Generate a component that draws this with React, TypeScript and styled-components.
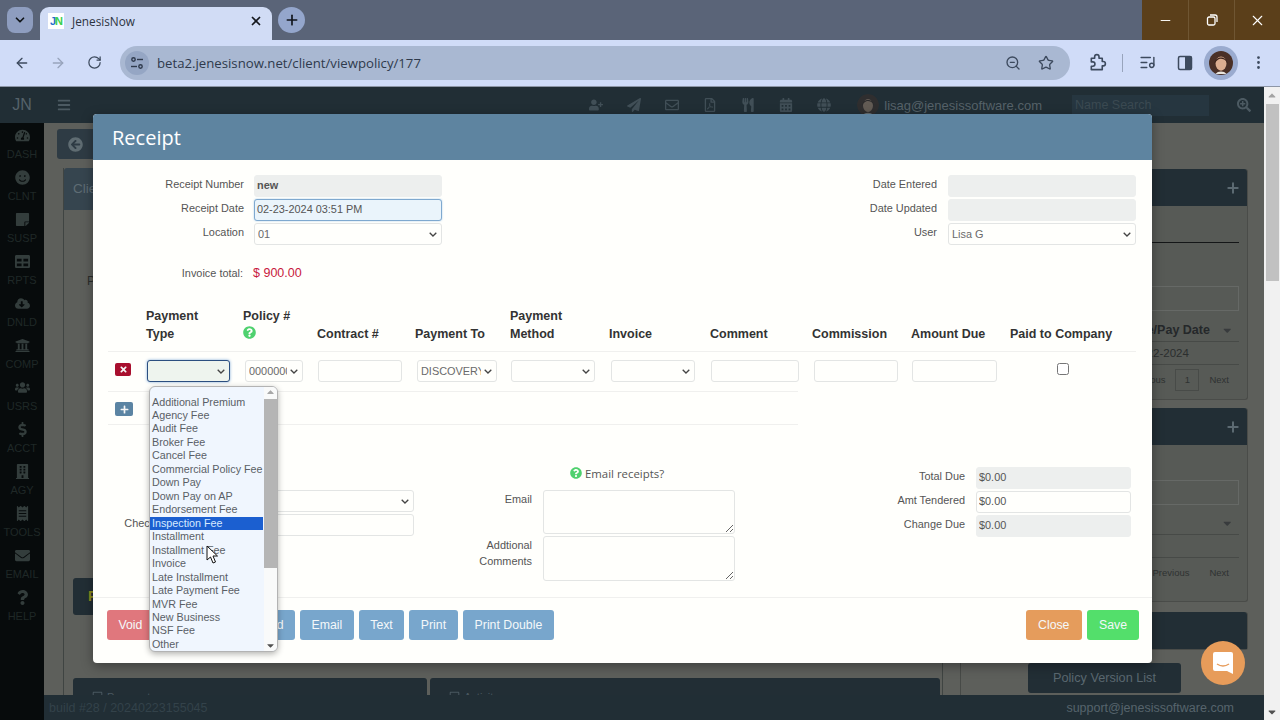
import React from "react";
import styled, { createGlobalStyle } from "styled-components";
import {
  ArrowLeft, ArrowRight, RotateCw, ZoomOut, Star, ListMusic, MoreVertical,
  ChevronDown, Plus, X, Minus,
} from "lucide-react";
import {
  FaTachometerAlt, FaSmile, FaStickyNote, FaTable, FaCloudDownloadAlt, FaUniversity, FaUsers,
  FaDollarSign, FaBuilding, FaReceipt, FaEnvelope, FaQuestion, FaUserPlus, FaPaperPlane,
  FaRegEnvelope, FaRegFilePdf, FaUtensils, FaCalendarAlt, FaGlobe, FaSearchPlus, FaBars,
  FaArrowCircleLeft, FaQuestionCircle, FaTimes, FaPlus, FaCaretDown, FaRegSquare,
} from "react-icons/fa";

const Global = createGlobalStyle`
  html, body { margin: 0; padding: 0; background: #5d5f5b; }
  * { box-sizing: border-box; }
  body { font-family: "Liberation Sans", Arial, sans-serif; }
`;

const Page = styled.div`
  position: relative;
  width: 1280px;
  height: 720px;
  overflow: hidden;
  display: flex;
  flex-direction: column;
`;

/* ---------- browser chrome ---------- */
const TabStrip = styled.div`
  height: 40px;
  background: #5a6478;
  display: flex;
  align-items: flex-end;
  padding-left: 7px;
  flex: none;
`;
const TabMenu = styled.div`
  width: 26px;
  height: 26px;
  margin-bottom: 7px;
  border-radius: 8px;
  background: #8e9dbf;
  color: #101418;
  display: flex;
  align-items: center;
  justify-content: center;
`;
const Tab = styled.div`
  width: 232px;
  height: 33px;
  margin-left: 7px;
  background: #d1dcf5;
  border-radius: 9px 9px 0 0;
  display: flex;
  align-items: center;
  padding: 0 9px 6px 8px;
  color: #2c3340;
  font: 11.8px "Open Sans", sans-serif;
`;
const Favicon = styled.div`
  width: 16px;
  height: 16px;
  background: #fff;
  font: bold 11px/16px "Liberation Sans", sans-serif;
  letter-spacing: -1px;
  text-align: center;
  margin-right: 8px;
  flex: none;
`;
const FavJ = styled.span`
  color: #1f6fd0;
`;
const FavN = styled.span`
  color: #3ccf4e;
`;
const TabTitle = styled.span`
  flex: 1;
`;
const NewTab = styled.div`
  width: 27px;
  height: 26px;
  margin: 0 0 7px 6px;
  border-radius: 50%;
  background: #94a6cc;
  color: #10151c;
  display: flex;
  align-items: center;
  justify-content: center;
`;
const WindowControls = styled.div`
  margin-left: auto;
  align-self: stretch;
  display: flex;
  background: #5b3f1a;
`;
const WinButton = styled.div`
  width: 46px;
  color: #fff;
  display: flex;
  align-items: center;
  justify-content: center;
  & + & {
    border-left: 1px solid #6f5633;
  }
`;
const Toolbar = styled.div`
  height: 47px;
  flex: none;
  background: #d0dcf8;
  border-bottom: 1px solid #8d96a6;
  display: flex;
  align-items: center;
  padding: 0 0 1px 0;
  color: #3d4a5e;
`;
const NavButton = styled.div<{ $dim?: boolean }>`
  width: 36px;
  display: flex;
  justify-content: center;
  color: ${(p) => (p.$dim ? "#98a4bc" : "#3d4a5e")};
`;
const NavGroup = styled.div`
  display: flex;
  width: 120px;
  padding-left: 4px;
`;
const AddressBar = styled.div`
  width: 950px;
  height: 34px;
  border-radius: 17px;
  background: #a9b8d2;
  display: flex;
  align-items: center;
  padding: 0 16px 0 5px;
  color: #2f3a4c;
  font: 13.2px "Open Sans", sans-serif;
`;
const SiteChip = styled.div`
  width: 24px;
  height: 24px;
  border-radius: 50%;
  background: #95a6c4;
  margin-right: 8px;
  display: flex;
  align-items: center;
  justify-content: center;
`;
const UrlText = styled.span`
  flex: 1;
`;
const AddressIcons = styled.div`
  display: flex;
  gap: 17px;
  color: #3d4a5e;
`;
const ToolIcons = styled.div`
  display: flex;
  align-items: center;
  margin-left: 8px;
`;
const ToolIcon = styled.div`
  width: 38px;
  display: flex;
  justify-content: center;
`;
const ToolDivider = styled.div`
  width: 1px;
  height: 18px;
  background: #98a4bc;
  margin: 0 5px 0 6px;
`;
const ProfileChip = styled.div`
  width: 34px;
  height: 34px;
  border-radius: 50%;
  background: #9aabcf;
  display: flex;
  align-items: center;
  justify-content: center;
  margin: 0 1px 0 0;
`;

/* ---------- dimmed application ---------- */
const Viewport = styled.div`
  flex: 1;
  min-height: 0;
  display: flex;
`;
const AppArea = styled.div`
  width: 1264px;
  display: flex;
  flex-direction: column;
`;
const TopBar = styled.div`
  height: 36px;
  flex: none;
  background: #212e35;
  display: flex;
  align-items: center;
  color: #414f57;
`;
const Brand = styled.div`
  width: 44px;
  text-align: center;
  font-size: 16px;
  font-weight: normal;
  color: #55626a;
`;
const MenuIcon = styled.div`
  margin-left: 13px;
  display: flex;
  color: #4c5a62;
`;
const TopIcons = styled.div`
  margin-left: auto;
  display: flex;
`;
const TopIcon = styled.div`
  width: 38px;
  display: flex;
  justify-content: center;
`;
const UserFace = styled.div`
  width: 22px;
  height: 22px;
  border-radius: 50%;
  margin: 0 5px 0 14px;
  overflow: hidden;
  display: flex;
  opacity: 0.35;
`;
const UserMail = styled.span`
  font-size: 13px;
  color: #566269;
  margin-right: 30px;
`;
const NameSearch = styled.div`
  width: 137px;
  height: 21px;
  background: #263640;
  color: #3b4a52;
  font-size: 12.5px;
  line-height: 21px;
  padding-left: 3px;
  margin-right: 28px;
`;
const SearchIcon = styled.div`
  margin-right: 13px;
  display: flex;
  color: #4c5a62;
`;
const Body = styled.div`
  flex: 1;
  min-height: 0;
  display: flex;
`;
const Sidebar = styled.div`
  width: 44px;
  flex: none;
  background: #070b0c;
  padding-top: 6px;
  display: flex;
  flex-direction: column;
`;
const SideItem = styled.div`
  height: 42px;
  flex: none;
  display: flex;
  flex-direction: column;
  align-items: center;
  color: #333d3c;
`;
const SideIconBox = styled.div`
  height: 16px;
  margin-top: -2px;
  display: flex;
  align-items: center;
  font-size: 15px;
`;
const SideLabel = styled.span`
  font-size: 11px;
  line-height: 13px;
  margin-top: 5px;
  color: #1f2827;
`;
const MainCol = styled.div`
  flex: 1;
  min-width: 0;
  display: flex;
  flex-direction: column;
`;
const Content = styled.div`
  flex: 1;
  min-height: 0;
  overflow: hidden;
  background: #5d5f5b;
  display: flex;
`;
const LeftCol = styled.div`
  width: 904px;
  padding: 6px 0 0 13px;
  flex: none;
`;
const BackButton = styled.div`
  width: 60px;
  height: 30px;
  background: #2e3b44;
  border-radius: 3px;
  color: #5f6c72;
  font-size: 15px;
  display: flex;
  align-items: center;
  padding-left: 11px;
`;
const ClientPanel = styled.div`
  margin: 9px 0 0 6px;
  border-left: 1px solid #3f4442;
  border-right: 1px solid #3f4442;
  width: 880px;
`;
const ClientHead = styled.div`
  height: 42px;
  background: #36454f;
  color: #5e6c74;
  font-size: 13.5px;
  line-height: 42px;
  padding-left: 9px;
  border-radius: 3px 3px 0 0;
`;
const ClientBody = styled.div`
  padding: 0 9px;
  display: flow-root;
`;
const PolicyLabel = styled.div`
  font-size: 12px;
  line-height: 14px;
  color: #2a2d2b;
  margin: 64px 0 0 14px;
`;
const DarkBlock = styled.div`
  height: 37px;
  margin-top: 290px;
  background: #222e35;
  border-radius: 3px;
  color: #8d8f1f;
  font-weight: bold;
  font-size: 14px;
  line-height: 37px;
  padding-left: 15px;
`;
const PanelPair = styled.div`
  display: grid;
  grid-template-columns: 354px 510px;
  gap: 3px;
  margin-top: 63px;
`;
const BottomPanel = styled.div`
  height: 40px;
  background: #222e35;
  border-radius: 3px;
  color: #4a5860;
  font-size: 11px;
  padding: 13px 0 0 19px;
  display: flex;
  gap: 4px;
`;
const RightCol = styled.div`
  width: 304px;
  flex: none;
  margin-left: 12px;
  padding: 46px 0 0 2px;
  border-left: 1px solid #474a47;
`;
const SidePanel = styled.div<{ $gap: number }>`
  width: 285px;
  border: 1px solid #4a4c49;
  border-width: 0 1px 1px 1px;
  border-radius: 3px;
  margin-bottom: ${(p) => p.$gap}px;
  background: #575a56;
`;
const SideHead = styled.div`
  height: 37px;
  background: #222e35;
  border-radius: 3px 3px 0 0;
  color: #5c6a72;
  display: flex;
  align-items: center;
  justify-content: flex-end;
  padding-right: 6px;
`;
const SideBodyArea = styled.div<{ $h: number }>`
  height: ${(p) => p.$h}px;
  padding: 0 8px 0 10px;
  display: flow-root;
`;
const BlackRule = styled.div`
  height: 1px;
  background: #141617;
  margin-top: 36px;
`;
const GhostBox = styled.div<{ $top: number }>`
  height: 25px;
  border: 1px solid #666966;
  margin-top: ${(p) => p.$top}px;
`;
const HeadRow = styled.div<{ $h: number }>`
  height: ${(p) => p.$h}px;
  border-bottom: 1px solid #474a47;
  display: flex;
  align-items: center;
  padding: 8px 0 0 156px;
  font: bold 12.5px "Liberation Sans", sans-serif;
  color: #25282a;
  white-space: nowrap;
`;
const SortArrow = styled.span`
  margin-left: auto;
  margin-right: 6px;
  display: flex;
  color: #383b3d;
`;
const DataRow = styled.div`
  height: 23px;
  border-bottom: 1px solid #474a47;
  padding-left: 156px;
  font-size: 11.5px;
  line-height: 23px;
  color: #2b2e2e;
`;
const Pager = styled.div`
  height: 29px;
  display: flex;
  align-items: center;
  justify-content: flex-end;
  gap: 10px;
  padding-right: 10px;
  font-size: 9.5px;
  color: #2f3232;
`;
const PageBox = styled.div`
  width: 24px;
  height: 22px;
  border: 1px solid #484b48;
  text-align: center;
  line-height: 20px;
`;
const VersionButton = styled.div`
  width: 153px;
  height: 30px;
  margin-left: 65px;
  background: #222e35;
  border-radius: 3px;
  color: #5a6870;
  font-size: 12.7px;
  line-height: 30px;
  text-align: center;
`;
const PageFooter = styled.div`
  height: 25px;
  flex: none;
  background: #212e35;
  display: flex;
  align-items: center;
  justify-content: space-between;
  padding: 0 30px 0 5px;
  font-size: 12.5px;
`;
const BuildNo = styled.span`
  color: #33424a;
`;
const Support = styled.span`
  color: #56646c;
`;
const ScrollTrack = styled.div`
  width: 16px;
  background: #f1f1f1;
  display: flex;
  flex-direction: column;
  align-items: center;
  color: #a3a3a3;
  padding-top: 3px;
`;
const ScrollThumb = styled.div`
  width: 13px;
  height: 177px;
  background: #c1c1c1;
  margin-top: 2px;
  flex: none;
`;
const ScrollEnd = styled.div`
  margin-top: auto;
  color: #505050;
  display: flex;
  padding-bottom: 2px;
`;
const ScrollUp = styled.div`
  height: 12px;
  display: flex;
  color: #a3a3a3;
  transform: rotate(180deg);
`;

/* ---------- modal ---------- */
const Modal = styled.div`
  position: absolute;
  left: 93px;
  top: 114px;
  width: 1059px;
  height: 549px;
  background: #fffffc;
  border-radius: 4px;
  box-shadow: 0 3px 12px rgba(0, 0, 0, 0.35);
  display: flex;
  flex-direction: column;
`;
const ModalHead = styled.div`
  height: 46px;
  flex: none;
  background: #5e84a0;
  border-radius: 4px 4px 0 0;
  color: #fff;
  font: 20px/47px "Open Sans", sans-serif;
  padding-left: 19px;
`;
const ModalBody = styled.div`
  flex: 1;
  min-height: 0;
  padding: 15px 16px 0 15px;
  display: flex;
  flex-direction: column;
`;
const TopForm = styled.div`
  display: flex;
  justify-content: space-between;
`;
const FieldGrid = styled.div<{ $label: number; $field: number; $gap?: number }>`
  display: grid;
  grid-template-columns: ${(p) => p.$label}px ${(p) => p.$field}px;
  column-gap: ${(p) => p.$gap ?? 10}px;
  row-gap: 2px;
  align-content: start;
  grid-auto-rows: minmax(22px, auto);
`;
const Label = styled.label`
  font-size: 10.9px;
  line-height: 18px;
  color: #555;
  text-align: right;
  align-self: start;
`;
const fieldCss = `
  display: block;
  width: 100%;
  height: 22px;
  font: 10.9px "Liberation Sans", sans-serif;
  color: #555;
  border: 1px solid #e3e5e4;
  border-radius: 3px;
  background: #fffffc;
  padding: 0 2px 2px;
  outline: none;
`;
const Field = styled.input<{ $state?: "static" | "focus"; $bold?: boolean }>`
  ${fieldCss}
  font-weight: ${(p) => (p.$bold ? "bold" : "normal")};
  ${(p) => p.$state === "static" && "background: #edefee; border-color: #edefee;"}
  ${(p) =>
    p.$state === "focus" &&
    "background: #eaf4fb; border-color: #7fa9cf; box-shadow: 0 0 2px #a9cbe8;"}
`;
const PickerBox = styled.div`
  position: relative;
  height: 22px;
`;
const PickerNative = styled.select<{ $focus?: boolean }>`
  ${fieldCss}
  appearance: none;
  padding: 0 15px 1px 3px;
  color: #6a6a6a;
  ${(p) =>
    p.$focus &&
    "background: #eef4ee; border-color: #2c4f80; box-shadow: 0 0 3px #7fa9d8;"}
`;
const PickerChevron = styled.svg`
  position: absolute;
  right: 5px;
  top: 9px;
  pointer-events: none;
`;
const HiddenChoice = styled.option``;

const Picker = ({ value, focus }: { value?: string; focus?: boolean }) => (
  <PickerBox>
    <PickerNative $focus={focus} defaultValue={value ?? ""}>
      <HiddenChoice value={value ?? ""}>{value ?? ""}</HiddenChoice>
    </PickerNative>
    <PickerChevron width="8" height="5" viewBox="0 0 8 5">
      <path d="M0.7 0.7 L4 4 L7.3 0.7" fill="none" stroke="#444" strokeWidth="1.3" />
    </PickerChevron>
  </PickerBox>
);

const TotalRow = styled.div`
  display: flex;
  gap: 10px;
  margin-top: 20px;
  line-height: 16px;
`;
const TotalLabel = styled.span`
  width: 135px;
  text-align: right;
  font-size: 10.9px;
  color: #555;
`;
const TotalValue = styled.span`
  font-size: 12.5px;
  color: #c8193c;
`;
const tableColumns = "38px 97px 74px 98px 95px 99px 101px 102px 99px 99px 125px";
const PayTableHead = styled.div`
  display: grid;
  grid-template-columns: ${tableColumns};
  margin-top: 26px;
  padding-bottom: 8px;
  border-bottom: 1px solid #f0f0ee;
  align-items: end;
  font: bold 12.5px/18px "Liberation Sans", sans-serif;
  color: #333;
`;
const HeadCell = styled.div`
  min-width: 0;
  white-space: nowrap;
`;
const HelpIcon = styled.span<{ $size?: number }>`
  display: inline-flex;
  color: #4fd16e;
  font-size: ${(p) => p.$size ?? 12}px;
  vertical-align: -1px;
`;
const PayRow = styled.div`
  display: grid;
  grid-template-columns: ${tableColumns};
  height: 40px;
  padding-top: 8px;
  background: linear-gradient(#f0f0ee, #f0f0ee) left bottom / 690px 1px no-repeat;
`;
const RowCell = styled.div<{ $left: number; $w: number }>`
  padding-left: ${(p) => p.$left}px;
  width: ${(p) => p.$left + p.$w}px;
`;
const IconButton = styled.div<{ $color: string; $w: number; $h: number; $top: number }>`
  width: ${(p) => p.$w}px;
  height: ${(p) => p.$h}px;
  margin: ${(p) => p.$top}px 0 0 7px;
  border-radius: 2px;
  background: ${(p) => p.$color};
  color: #f6f6f6;
  font-size: 9px;
  display: flex;
  align-items: center;
  justify-content: center;
`;
const CheckCell = styled.div`
  padding: 3px 0 0 47px;
  display: flex;
`;
const Check = styled.input`
  width: 12px;
  height: 12px;
  margin: 0;
  accent-color: #888;
`;
const AddRow = styled.div`
  height: 33px;
  padding-top: 10px;
  background: linear-gradient(#f0f0ee, #f0f0ee) left bottom / 690px 1px no-repeat;
`;
const Lower = styled.div`
  flex: 1;
  display: grid;
  grid-template-columns: 306px 321px 396px;
  padding-top: 40px;
  align-items: start;
`;
const LowerLeft = styled.div`
  padding-top: 25px;
`;
const EmailNote = styled.div`
  height: 16px;
  margin: 0 0 9px 156px;
  display: flex;
  align-items: center;
  gap: 3px;
  font: 11.4px "Open Sans", sans-serif;
  color: #555;
`;
const LongLabel = styled(Label)`
  line-height: 16px;
  padding-top: 1px;
`;
const Note = styled.textarea<{ $h: number }>`
  ${fieldCss}
  height: ${(p) => p.$h}px;
  resize: vertical;
`;
const LowerRight = styled.div`
  padding-top: 2px;
`;
const ModalFoot = styled.div`
  height: 66px;
  flex: none;
  border-top: 1px solid #f0f0ee;
  padding: 12px 13px 0 14px;
  display: flex;
  gap: 5px;
`;
const Btn = styled.div<{ $bg: string; $gapLeft?: number; $pad?: number }>`
  height: 30px;
  padding: 0 ${(p) => p.$pad ?? 11.5}px;
  background: ${(p) => p.$bg};
  border-radius: 3px;
  color: #f4f8fa;
  font-size: 12.3px;
  line-height: 30px;
  margin-left: ${(p) => p.$gapLeft ?? 0}px;
`;
const FootSpacer = styled.div`
  flex: 1;
`;

/* ---------- dropdown list ---------- */
const Dropdown = styled.div`
  position: absolute;
  left: 56px;
  top: 272px;
  width: 129px;
  height: 266px;
  background: #f0f6fe;
  border: 1px solid #b3b3b3;
  border-radius: 6px;
  box-shadow: 0 2px 6px rgba(0, 0, 0, 0.3);
  display: flex;
  overflow: hidden;
`;
const OptionList = styled.div`
  flex: 1;
  padding: 8.5px 0 0 0;
`;
const Option = styled.div<{ $on?: boolean }>`
  height: 13.47px;
  line-height: 13.47px;
  font-size: 10.75px;
  padding-left: 2px;
  margin-right: 1px;
  white-space: nowrap;
  color: ${(p) => (p.$on ? "#d6eaff" : "#5a5f66")};
  background: ${(p) => (p.$on ? "#1b5fd0" : "transparent")};
`;
const ListScroll = styled.div`
  width: 14px;
  flex: none;
  background: #f9fafa;
  display: flex;
  flex-direction: column;
  align-items: center;
`;
const ListThumb = styled.div`
  width: 14px;
  height: 169px;
  background: #b5b5b5;
  flex: none;
`;
const ListArrow = styled.div<{ $up?: boolean; $dark?: boolean }>`
  height: 12px;
  display: flex;
  align-items: center;
  justify-content: center;
  font-size: 11px;
  color: ${(p) => (p.$dark ? "#505050" : "#a8a8a8")};
  transform: ${(p) => (p.$up ? "rotate(180deg)" : "none")};
`;
const ListArrowBottom = styled(ListArrow)`
  margin-top: auto;
`;
const CursorMark = styled.svg`
  position: absolute;
  left: 206px;
  top: 545px;
`;
const Bubble = styled.div`
  position: absolute;
  left: 1201px;
  top: 641px;
  width: 44px;
  height: 44px;
  border-radius: 50%;
  background: #e79c5a;
  display: flex;
  align-items: center;
  justify-content: center;
`;

const sideItems: [React.ReactNode, string][] = [
  [<FaTachometerAlt />, "DASH"],
  [<FaSmile />, "CLNT"],
  [<FaStickyNote />, "SUSP"],
  [<FaTable />, "RPTS"],
  [<FaCloudDownloadAlt />, "DNLD"],
  [<FaUniversity />, "COMP"],
  [<FaUsers />, "USRS"],
  [<FaDollarSign />, "ACCT"],
  [<FaBuilding />, "AGY"],
  [<FaReceipt />, "TOOLS"],
  [<FaEnvelope />, "EMAIL"],
  [<FaQuestion />, "HELP"],
];
const topIcons = [FaUserPlus, FaPaperPlane, FaRegEnvelope, FaRegFilePdf, FaUtensils, FaCalendarAlt, FaGlobe];
const options = [
  "Additional Premium", "Agency Fee", "Audit Fee", "Broker Fee", "Cancel Fee", "Commercial Policy Fee",
  "Down Pay", "Down Pay on AP", "Endorsement Fee", "Inspection Fee", "Installment", "Installment Fee",
  "Invoice", "Late Installment", "Late Payment Fee", "MVR Fee", "New Business", "NSF Fee", "Other",
];
const heads = ["Payment Type", "", "Contract #", "Payment To", "Payment Method", "Invoice", "Comment", "Commission", "Amount Due", "Paid to Company"];

const Portrait = ({ size }: { size: number }) => (
  <svg width={size} height={size} viewBox="0 0 22 22">
    <circle cx="11" cy="11" r="11" fill="#4a3026" />
    <ellipse cx="11" cy="11.5" rx="5" ry="6.5" fill="#dcae90" />
    <path d="M5 12 C5 4 17 4 17 12 C16 8 13 7 10 7 C8 8 6 9 5 12Z" fill="#3a2219" />
    <path d="M6 21 C8 18 14 18 16 21 Z" fill="#e8e4dc" />
  </svg>
);

const PaymentRow = () => (
  <PayRow>
    <IconButton $color="#a80f2e" $w={16} $h={13} $top={3}><FaTimes /></IconButton>
    <RowCell $left={1} $w={83}><Picker focus /></RowCell>
    <RowCell $left={2} $w={58}><Picker value="00000000" /></RowCell>
    <RowCell $left={1} $w={84}><Field defaultValue="" /></RowCell>
    <RowCell $left={2} $w={80}><Picker value="DISCOVERY" /></RowCell>
    <RowCell $left={1} $w={84}><Picker /></RowCell>
    <RowCell $left={2} $w={84}><Picker /></RowCell>
    <RowCell $left={1} $w={88}><Field defaultValue="" /></RowCell>
    <RowCell $left={2} $w={84}><Field defaultValue="" /></RowCell>
    <RowCell $left={1} $w={85}><Field defaultValue="" /></RowCell>
    <CheckCell><Check type="checkbox" /></CheckCell>
  </PayRow>
);

export default function App() {
  return (
    <Page>
      <Global />
      <TabStrip>
        <TabMenu><ChevronDown size={14} strokeWidth={3} /></TabMenu>
        <Tab>
          <Favicon><FavJ>J</FavJ><FavN>N</FavN></Favicon>
          <TabTitle>JenesisNow</TabTitle>
          <X size={14} strokeWidth={3} color="#15181d" />
        </Tab>
        <NewTab><Plus size={16} strokeWidth={2.5} /></NewTab>
        <WindowControls>
          <WinButton><Minus size={15} strokeWidth={1.5} /></WinButton>
          <WinButton>
            <svg width="14" height="14" viewBox="0 0 14 14" fill="none" stroke="#fff" strokeWidth="1.3">
              <rect x="2.5" y="4" width="7.5" height="8" rx="1.5" />
              <path d="M5 2 H10 Q12 2 12 4 V9" />
            </svg>
          </WinButton>
          <WinButton><X size={17} strokeWidth={1.5} /></WinButton>
        </WindowControls>
      </TabStrip>
      <Toolbar>
        <NavGroup>
          <NavButton><ArrowLeft size={16} /></NavButton>
          <NavButton $dim><ArrowRight size={16} /></NavButton>
          <NavButton><RotateCw size={15} /></NavButton>
        </NavGroup>
        <AddressBar>
          <SiteChip>
            <svg width="14" height="14" viewBox="0 0 14 14" fill="none" stroke="#2f3a4c" strokeWidth="1.4">
              <circle cx="3.5" cy="3.5" r="1.7" />
              <path d="M7 3.5 H13" />
              <circle cx="10.5" cy="10.5" r="1.7" />
              <path d="M1 10.5 H7" />
            </svg>
          </SiteChip>
          <UrlText>beta2.jenesisnow.net/client/viewpolicy/177</UrlText>
          <AddressIcons>
            <ZoomOut size={16} />
            <Star size={16} />
          </AddressIcons>
        </AddressBar>
        <ToolIcons>
          <ToolIcon>
            <svg width="19" height="19" viewBox="0 0 20 20" fill="none" stroke="#3d4a5e" strokeWidth="1.7" strokeLinejoin="round">
              <path d="M3.5 5.5 H7 V4 a2.3 2.3 0 0 1 4.6 0 V5.5 H15 V9 h1 a2.3 2.3 0 0 1 0 4.6 h-1 V17.5 H3.5 V14 H5 a2.3 2.3 0 0 0 0 -4.6 H3.5 Z" />
            </svg>
          </ToolIcon>
          <ToolDivider />
          <ToolIcon><ListMusic size={17} /></ToolIcon>
          <ToolIcon>
            <svg width="16" height="16" viewBox="0 0 16 16">
              <rect x="1.5" y="1.5" width="13" height="13" rx="1.5" fill="none" stroke="#3d4a5e" strokeWidth="1.5" />
              <rect x="8" y="1.5" width="6.5" height="13" fill="#3d4a5e" />
            </svg>
          </ToolIcon>
          <ProfileChip><Portrait size={24} /></ProfileChip>
          <ToolIcon><MoreVertical size={17} /></ToolIcon>
        </ToolIcons>
      </Toolbar>
      <Viewport>
        <AppArea>
          <TopBar>
            <Brand>JN</Brand>
            <MenuIcon><FaBars size={14} /></MenuIcon>
            <TopIcons>
              {topIcons.map((I, i) => (
                <TopIcon key={i}><I size={14} /></TopIcon>
              ))}
            </TopIcons>
            <UserFace><Portrait size={22} /></UserFace>
            <UserMail>lisag@jenesissoftware.com</UserMail>
            <NameSearch>Name Search</NameSearch>
            <SearchIcon><FaSearchPlus size={14} /></SearchIcon>
          </TopBar>
          <Body>
            <Sidebar>
              {sideItems.map(([icon, label]) => (
                <SideItem key={label}>
                  <SideIconBox>{icon}</SideIconBox>
                  <SideLabel>{label}</SideLabel>
                </SideItem>
              ))}
            </Sidebar>
            <MainCol>
              <Content>
                <LeftCol>
                  <BackButton><FaArrowCircleLeft /></BackButton>
                  <ClientPanel>
                    <ClientHead>Client</ClientHead>
                    <ClientBody>
                      <PolicyLabel>Policy</PolicyLabel>
                      <DarkBlock>Payments</DarkBlock>
                      <PanelPair>
                        <BottomPanel><FaRegSquare /> Payments</BottomPanel>
                        <BottomPanel><FaRegSquare /> Activity</BottomPanel>
                      </PanelPair>
                    </ClientBody>
                  </ClientPanel>
                </LeftCol>
                <RightCol>
                  <SidePanel $gap={8}>
                    <SideHead><Plus size={16} strokeWidth={3} /></SideHead>
                    <SideBodyArea $h={193}>
                      <BlackRule />
                      <GhostBox $top={43} />
                      <HeadRow $h={31}>Due/Pay Date<SortArrow><FaCaretDown /></SortArrow></HeadRow>
                      <DataRow>02-22-2024</DataRow>
                      <Pager>Previous<PageBox>1</PageBox>Next</Pager>
                    </SideBodyArea>
                  </SidePanel>
                  <SidePanel $gap={10}>
                    <SideHead><Plus size={16} strokeWidth={3} /></SideHead>
                    <SideBodyArea $h={156}>
                      <GhostBox $top={35} />
                      <HeadRow $h={30}><SortArrow><FaCaretDown /></SortArrow></HeadRow>
                      <DataRow />
                      <Pager>Previous<span />Next</Pager>
                    </SideBodyArea>
                  </SidePanel>
                  <SidePanel $gap={13}>
                    <SideHead />
                  </SidePanel>
                  <VersionButton>Policy Version List</VersionButton>
                </RightCol>
              </Content>
              <PageFooter>
                <BuildNo>build #28 / 20240223155045</BuildNo>
                <Support>support@jenesissoftware.com</Support>
              </PageFooter>
            </MainCol>
          </Body>
        </AppArea>
        <ScrollTrack>
          <ScrollUp><FaCaretDown size={12} /></ScrollUp>
          <ScrollThumb />
          <ScrollEnd><FaCaretDown size={12} /></ScrollEnd>
        </ScrollTrack>
      </Viewport>

      <Modal>
        <ModalHead>Receipt</ModalHead>
        <ModalBody>
          <TopForm>
            <FieldGrid $label={136} $field={188}>
              <Label>Receipt Number</Label>
              <Field $state="static" $bold readOnly defaultValue="new" />
              <Label>Receipt Date</Label>
              <Field $state="focus" defaultValue="02-23-2024 03:51 PM" />
              <Label>Location</Label>
              <Picker value="01" />
            </FieldGrid>
            <FieldGrid $label={120} $field={188} $gap={11}>
              <Label>Date Entered</Label>
              <Field $state="static" readOnly defaultValue="" />
              <Label>Date Updated</Label>
              <Field $state="static" readOnly defaultValue="" />
              <Label>User</Label>
              <Picker value="Lisa G" />
            </FieldGrid>
          </TopForm>
          <TotalRow>
            <TotalLabel>Invoice total:</TotalLabel>
            <TotalValue>$ 900.00</TotalValue>
          </TotalRow>
          <PayTableHead>
            <HeadCell />
            {heads.map((h, i) => (
              <HeadCell key={i}>
                {i === 1 ? (
                  <>Policy #<br /><HelpIcon $size={13}><FaQuestionCircle /></HelpIcon></>
                ) : h === "Payment Type" ? (
                  <>Payment<br />Type</>
                ) : h === "Payment Method" ? (
                  <>Payment<br />Method</>
                ) : (
                  h
                )}
              </HeadCell>
            ))}
          </PayTableHead>
          <PaymentRow />
          <AddRow>
            <IconButton $color="#5b84a3" $w={18} $h={14} $top={0}><FaPlus /></IconButton>
          </AddRow>
          <Lower>
            <LowerLeft>
              <FieldGrid $label={89} $field={207}>
                <Label />
                <Picker />
                <Label>Check Number</Label>
                <Field defaultValue="" />
              </FieldGrid>
            </LowerLeft>
            <div>
              <EmailNote>
                <HelpIcon $size={12}><FaQuestionCircle /></HelpIcon>
                Email receipts?
              </EmailNote>
              <FieldGrid $label={118} $field={192} $gap={11}>
                <Label>Email</Label>
                <Note $h={44} defaultValue="" />
                <LongLabel>Addtional<br />Comments</LongLabel>
                <Note $h={45} defaultValue="" />
              </FieldGrid>
            </div>
            <LowerRight>
              <FieldGrid $label={230} $field={155} $gap={11}>
                <Label>Total Due</Label>
                <Field $state="static" readOnly defaultValue="$0.00" />
                <Label>Amt Tendered</Label>
                <Field defaultValue="$0.00" />
                <Label>Change Due</Label>
                <Field $state="static" readOnly defaultValue="$0.00" />
              </FieldGrid>
            </LowerRight>
          </Lower>
        </ModalBody>
        <ModalFoot>
          <Btn $bg="#e0777d">Void</Btn>
          <Btn $bg="#78a6cc" $gapLeft={73.4}>Refund</Btn>
          <Btn $bg="#78a6cc">Email</Btn>
          <Btn $bg="#78a6cc">Text</Btn>
          <Btn $bg="#78a6cc">Print</Btn>
          <Btn $bg="#78a6cc" $pad={12}>Print Double</Btn>
          <FootSpacer />
          <Btn $bg="#e59c5c" $pad={12.5}>Close</Btn>
          <Btn $bg="#53df6b" $pad={12}>Save</Btn>
        </ModalFoot>
        <Dropdown>
          <OptionList>
            {options.map((o) => (
              <Option key={o} $on={o === "Inspection Fee"}>{o}</Option>
            ))}
          </OptionList>
          <ListScroll>
            <ListArrow $up><FaCaretDown /></ListArrow>
            <ListThumb />
            <ListArrowBottom $dark><FaCaretDown /></ListArrowBottom>
          </ListScroll>
        </Dropdown>
      </Modal>
      <CursorMark width="13" height="19" viewBox="0 0 13 19">
        <path d="M1 1 V15 L4.5 12 L7 18 L9.5 17 L7 11 H11.5 Z" fill="#fff" stroke="#111" strokeWidth="1" />
      </CursorMark>
      <Bubble>
        <svg width="22" height="24" viewBox="0 0 22 24">
          <path d="M3 1 H19 Q21 1 21 3 V23 L15 20 H3 Q1 20 1 18 V3 Q1 1 3 1Z" fill="#fff" />
          <path d="M5 13 Q11 17 17 13" fill="none" stroke="#e79c5a" strokeWidth="1.5" />
        </svg>
      </Bubble>
    </Page>
  );
}
